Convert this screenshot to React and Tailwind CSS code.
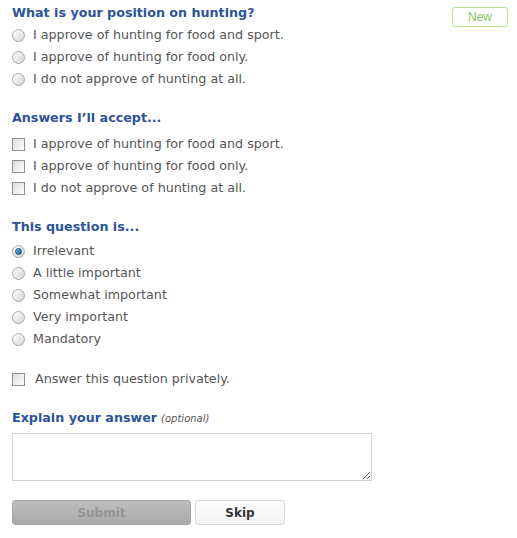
const positions = [
  "I approve of hunting for food and sport.",
  "I approve of hunting for food only.",
  "I do not approve of hunting at all.",
];

const importance = [
  "Irrelevant",
  "A little important",
  "Somewhat important",
  "Very important",
  "Mandatory",
];

function Radio({ checked }) {
  return (
    <span className="flex h-[13px] w-[13px] shrink-0 items-center justify-center rounded-full border border-[#a9a9a9] bg-gradient-to-br from-[#ffffff] to-[#d4d4d4]">
      {checked && (
        <span className="h-[7px] w-[7px] rounded-full border border-[#1d4f7a] bg-gradient-to-br from-[#6fc0ec] to-[#0b5d96]" />
      )}
    </span>
  );
}

function Checkbox() {
  return (
    <span className="block h-[13px] w-[13px] shrink-0 border border-[#8f8f8f] bg-gradient-to-br from-[#dcdcdc] to-[#ffffff]" />
  );
}

function Heading({ children }) {
  return (
    <h2 className="text-[12.7px] font-bold leading-[16px] text-[#2c5497]">{children}</h2>
  );
}

export default function App() {
  return (
    <div className="relative h-[538px] w-[517px] bg-white px-3 pt-[5px] font-['DejaVu_Sans',Verdana,sans-serif] text-[12.7px] text-[#555]">
      <span className="absolute right-[9px] top-[7px] flex h-[20px] w-[56px] items-center justify-center rounded-[3px] border border-[#b8e28e] text-[12px] text-[#8dc35e] font-['Liberation_Sans',Arial,sans-serif]">
        New
      </span>

      <Heading>What is your position on hunting?</Heading>
      <div className="mt-[3px] flex flex-col">
        {positions.map((p) => (
          <label key={p} className="flex h-[22px] items-center gap-[8px]">
            <Radio />
            <span>{p}</span>
          </label>
        ))}
      </div>

      <div className="mt-[20px]">
        <Heading>Answers I’ll accept...</Heading>
      </div>
      <div className="mt-[7px] flex flex-col">
        {positions.map((p) => (
          <label key={p} className="flex h-[22px] items-center gap-[8px]">
            <Checkbox />
            <span>{p}</span>
          </label>
        ))}
      </div>

      <div className="mt-[20px]">
        <Heading>This question is...</Heading>
      </div>
      <div className="mt-[5px] flex flex-col">
        {importance.map((p, i) => (
          <label key={p} className="flex h-[22px] items-center gap-[8px]">
            <Radio checked={i === 0} />
            <span>{p}</span>
          </label>
        ))}
      </div>

      <label className="mt-[18px] flex h-[22px] items-center gap-[10px]">
        <Checkbox />
        <span>Answer this question privately.</span>
      </label>

      <div className="mt-[20px] flex items-baseline gap-[4px]">
        <Heading>Explain your answer</Heading>
        <span className="text-[10px] italic text-[#555]">(optional)</span>
      </div>

      <textarea className="mt-[7px] block h-[48px] w-[360px] resize border border-[#cfcfcf] bg-white outline-none" />

      <div className="mt-[19px] flex gap-[4px]">
        <button className="h-[25px] w-[179px] rounded-[3px] border border-[#a7a7a7] bg-gradient-to-b from-[#bdbdbd] to-[#aaaaaa] text-[12px] font-bold text-[#959595]">
          Submit
        </button>
        <button className="h-[25px] w-[90px] rounded-[3px] border border-[#d9d9d9] bg-gradient-to-b from-[#ffffff] to-[#f1f1f1] text-[12px] font-bold text-[#333]">
          Skip
        </button>
      </div>
    </div>
  );
}
